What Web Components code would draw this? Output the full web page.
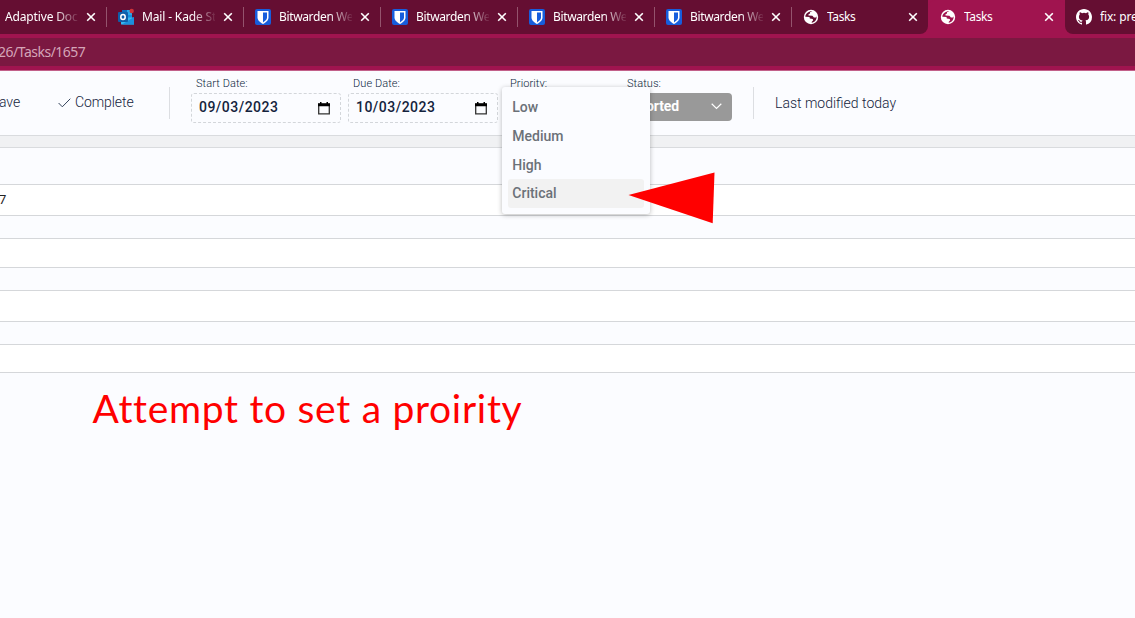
<!DOCTYPE html>
<html lang="en">
<head>
<meta charset="utf-8">
<title>Tasks</title>
<style>
html,body{margin:0;height:100%;overflow:hidden}
</style>
</head>
<body>
<task-window></task-window>
<script>
const define = (name, html, setup) => customElements.define(name, class extends HTMLElement {
  connectedCallback() {
    if (this.shadowRoot) return;
    const t = document.createElement('template');
    t.innerHTML = html;
    this.attachShadow({mode: 'open'}).append(t.content.cloneNode(true));
    if (setup) setup(this);
  }
});

const icons = {
  none: '',
  outlook: '<svg width="18" height="18" viewBox="0 0 18 18"><path d="M5 2h10v13H5z" fill="#28a8ea"/><path d="M5 2h5v5H5z" fill="#0a6fc0"/><path d="M10 7h5v4h-5z" fill="#1490df"/><path d="M4 9.500h13v7H4z" fill="#35b8f1"/><path d="M5 16.500L17 9v7.500z" fill="#1b8fdc"/><rect x="1" y="4" width="10" height="10" rx="1" fill="#0f5ea8"/><ellipse cx="6" cy="9" rx="2.200" ry="2.500" fill="none" stroke="#fff" stroke-width="1.500"/><circle cx="14.700" cy="3" r="2.200" fill="#d13438"/></svg>',
  bitwarden: '<svg width="18" height="18" viewBox="0 0 18 18"><rect x="1" y="1" width="16" height="16" rx="2" fill="#175ddc"/><path d="M3.500 3h11v6.500c0 3-2.800 5-5.500 6.500-2.700-1.500-5.500-3.500-5.500-6.500z" fill="#fff"/><path d="M9 4.600h4v5c0 2-2 3.600-4 4.800z" fill="#175ddc"/></svg>',
  globe: '<svg width="18" height="18" viewBox="0 0 18 18"><circle cx="9" cy="9" r="7.200" fill="#fff"/><path d="M10.400 3.200L8 4.200v1.400L6.500 6.200v1.300l3.900.3 1.500 1.700 2.100-.1.600-1.200c.3 3.600-1.900 6.100-4.900 6.500l.1-1 1.400-1.400-.5-1.400-2.900-.4-.3-1.500-4.200-.2C3.400 5.600 6.600 3 10.400 3.200z" fill="#650e32"/></svg>',
  github: '<svg width="18" height="18" viewBox="-1 -1 18 18"><path fill="#fff" d="M8 0C3.580 0 0 3.580 0 8c0 3.540 2.290 6.530 5.470 7.590.4.070.55-.17.55-.38 0-.19-.01-.82-.01-1.490-2.010.37-2.530-.49-2.690-.94-.09-.23-.48-.94-.82-1.130-.28-.15-.68-.52-.01-.53.63-.01 1.080.58 1.230.82.720 1.210 1.870.87 2.330.66.070-.52.28-.87.51-1.070-1.780-.2-3.640-.89-3.640-3.950 0-.87.31-1.590.82-2.150-.08-.2-.36-1.020.08-2.120 0 0 .67-.21 2.200.82a7.600 7.600 0 0 1 4 0c1.530-1.040 2.200-.82 2.200-.82.44 1.100.16 1.920.08 2.120.51.56.82 1.270.82 2.150 0 3.070-1.870 3.750-3.650 3.950.29.25.54.73.54 1.480 0 1.070-.01 1.930-.01 2.200 0 .21.15.46.55.38A8 8 0 0 0 16 8c0-4.420-3.580-8-8-8z"/></svg>'
};

define('browser-tab', `<style>
:host{display:flex;position:relative;box-sizing:border-box;flex:none;width:137px;height:34px;align-items:center;padding-left:11px;background:#650e32;color:#fff;font:12px/16px "Noto Sans","Open Sans",sans-serif}
:host([separated])::before{content:"";position:absolute;left:0;top:7px;width:1px;height:20px;background:#94536d}
:host([active]){background:#a0144f;border-radius:8px 8px 0 0}
:host([before]){border-bottom-right-radius:8px}
:host([after]){border-bottom-left-radius:8px;padding-left:10px}
.icon{width:18px;height:18px;flex:none}
.icon svg{display:block}
:host([active]) .icon path{fill:#a0144f}
.label{width:73px;margin-left:7px;overflow:hidden;white-space:nowrap;letter-spacing:-.15px}
:host([icon=globe]) .label{letter-spacing:-.4px}
:host([icon=bitwarden]) .label{letter-spacing:-.36px}
:host([fade]) .label{-webkit-mask-image:linear-gradient(90deg,#000 50px,transparent 75px);mask-image:linear-gradient(90deg,#000 50px,transparent 75px)}
.close{margin-left:8px;flex:none}
:host([active]) .close{margin-left:7px}
</style><span class="icon"></span><span class="label"><slot></slot></span>
<svg class="close" width="10" height="10" viewBox="0 0 10 10"><path d="M1.200 1.200l7.600 7.600M8.800 1.200L1.200 8.800" stroke="#fff" stroke-width="1.600"/></svg>`,
  el => el.shadowRoot.querySelector('.icon').innerHTML = icons[el.getAttribute('icon') || 'none']);

define('browser-chrome', `<style>
:host{display:block;height:71px;background:#a0144f;overflow:hidden}
.strip{display:flex;height:34px;margin-left:-31px;width:1240px}
.url{margin-top:4px;height:28px;background:#7b1841;color:#d5a5b8;font:14px/28px "Noto Sans",sans-serif;letter-spacing:-.5px}
.url span{margin-left:-2px}
.edge{margin-top:4px;height:1px;background:#c2608a}
</style>
<div class="strip">
<browser-tab fade>Adaptive Docu</browser-tab>
<browser-tab icon="outlook" separated fade>Mail - Kade Sto</browser-tab>
<browser-tab icon="bitwarden" separated fade>Bitwarden Web</browser-tab>
<browser-tab icon="bitwarden" separated fade>Bitwarden Web</browser-tab>
<browser-tab icon="bitwarden" separated fade>Bitwarden Web</browser-tab>
<browser-tab icon="bitwarden" separated fade>Bitwarden Web</browser-tab>
<browser-tab icon="globe" separated before>Tasks</browser-tab>
<browser-tab icon="globe" active>Tasks</browser-tab>
<browser-tab icon="github" after>fix: pre</browser-tab>
</div>
<div class="url"><span>26/Tasks/1657</span></div><div class="edge"></div>`);

define('date-field', `<style>
:host{display:block;width:150px;flex:none}
.label{font:300 11px/14px Roboto,sans-serif;padding:1px 0 0 5px;letter-spacing:.08px;color:#0b1f3d}
.box{display:flex;box-sizing:border-box;height:30px;margin-top:2px;border:1px dashed #d3d6da;border-radius:3px;align-items:center;justify-content:space-between;padding:0 10px 2px 7px;font:500 14px/16px Roboto,sans-serif;letter-spacing:.48px;color:#14233c}
svg{margin-top:3px}
</style><div class="label"><slot name="label"></slot></div>
<div class="box"><slot></slot><svg width="12" height="13" viewBox="0 0 12 13"><path d="M.7 2.500h10.600v9.300H.7z" fill="none" stroke="#333" stroke-width="1.300"/><path d="M0 1.200h12v3H0zM2 0h1.500v2H2zM8.500 0H10v2H8.500z" fill="#000"/></svg></div>`);

define('status-field', `<style>
:host{display:block;width:110px;flex:none}
.label{font:300 11px/14px Roboto,sans-serif;padding:1px 0 0 5px;letter-spacing:.08px;color:#0b1f3d}
.box{display:flex;box-sizing:border-box;height:28px;margin-top:2px;border-radius:4px;background:#999;color:#fff;align-items:center;justify-content:space-between;padding:0 10px 2px 0;font:700 14px/16px Roboto,sans-serif;letter-spacing:-.12px}
</style><div class="label">Status:</div>
<div class="box"><span>Reported</span><svg width="11" height="7" viewBox="0 0 11 7"><path d="M.7.8l4.800 4.600L10.300.8" fill="none" stroke="#fff" stroke-width="1.200"/></svg></div>`);

define('priority-menu', `<style>
:host{position:absolute;left:502px;top:87px;width:148px;height:127px;box-sizing:border-box;padding:6px;background:#fbfcff;border-radius:3px;box-shadow:0 1px 5px rgba(0,0,0,.27);font:500 14px/28px Roboto,sans-serif;color:#6b7178;z-index:2}
div{height:29px;padding-left:4.300px;border-radius:3px;box-sizing:border-box;width:136px}
.hover{background:#f2f2f2;margin-top:-1px}
</style><div>Low</div><div>Medium</div><div>High</div><div class="hover">Critical</div>`);

define('task-toolbar', `<style>
:host{display:flex;height:64px;border-bottom:1px solid #d9dbde;background:#fbfcff;color:#14233c;font:300 14px/20px Roboto,sans-serif}
.act{margin-top:21px;white-space:nowrap;letter-spacing:-.08px}
.save{width:57px;flex:none}
.save span{margin-left:-1px}
.done{display:flex;width:112px;flex:none}
.done svg{margin:6px 4px 0 1px}
.rule{width:1px;height:32px;margin-top:16px;background:#dcdee2;flex:none}
date-field,.prio,status-field{margin-top:5px}
.d1{margin-left:21px}.d2{margin-left:7px}
.prio{width:112px;margin-left:7px;padding:1px 0 0 5px;box-sizing:border-box;font-size:11px;line-height:14px;letter-spacing:.08px;flex:none;color:#0b1f3d}
status-field{margin-left:5px}
.r2{margin-left:21px}
.mod{margin:22px 0 0 21px}
</style>
<div class="act save"><span>ave</span></div>
<div class="act done"><svg width="13" height="10" viewBox="0 0 13 10"><path d="M.6 5l3.700 3.800L12.300.7" fill="none" stroke="#34445c" stroke-width="1"/></svg><span>Complete</span></div>
<div class="rule"></div>
<date-field class="d1"><span slot="label">Start Date:</span>09/03/2023</date-field>
<date-field class="d2"><span slot="label">Due Date:</span>10/03/2023</date-field>
<div class="prio">Priority:</div>
<status-field></status-field>
<div class="rule r2"></div>
<div class="mod">Last modified today</div>`);

define('form-row', `<style>
:host{display:block;box-sizing:border-box;background:#fff;border:solid #d5d7da;border-width:1px 0;font:400 13px/29px Roboto,sans-serif;color:#222;height:var(--h,30px)}
slot{display:block;margin-left:-1px}
</style><slot></slot>`);

define('pointer-arrow', `<style>
:host{position:absolute;left:628px;top:172px;width:87px;height:52px;z-index:3}svg{display:block}
</style><svg width="87" height="52"><path d="M.5 23L86.500.5l-1.800 50.800z" fill="red"/></svg>`);

define('task-window', `<style>
:host{display:block;position:relative;height:618px;width:1135px;overflow:hidden;background:#fbfcff}
.gap{height:11px;background:#f0f1f3;border-bottom:1px solid #d9dbde}
.form{display:flex;flex-direction:column;gap:22px;padding-top:36px}
.tall{--h:32px}
.note{margin:11px 0 0 92.500px;font:39px/48px Lato,"Open Sans",sans-serif;color:red;white-space:nowrap;letter-spacing:.7px}
</style>
<browser-chrome></browser-chrome>
<task-toolbar></task-toolbar>
<div class="gap"></div>
<div class="form"><form-row class="tall">7</form-row><form-row></form-row><form-row class="tall"></form-row><form-row style="--h:29px"></form-row></div>
<div class="note">Attempt to set a proirity</div>
<priority-menu></priority-menu>
<pointer-arrow></pointer-arrow>`);
</script>
</body>
</html>
